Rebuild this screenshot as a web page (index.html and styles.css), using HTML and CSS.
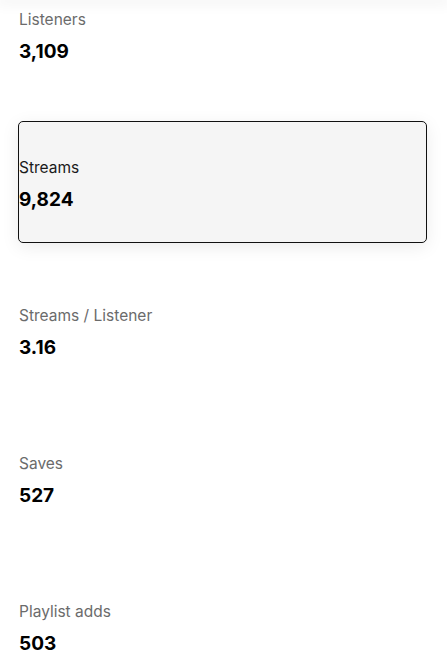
FILE: index.html
```html
<!DOCTYPE html>
<html>
<head>
    <link rel="stylesheet" href="styles.css">
</head>
<body>

<div class="top-shadow"></div>

<div class="stats">
    <div class="stat">
        <div class="stat-label">Listeners</div>
        <div class="stat-value">3,109</div>
    </div>
    <div class="stat selected">
        <div class="stat-label">Streams</div>
        <div class="stat-value">9,824</div>
    </div>
    <div class="stat">
        <div class="stat-label">Streams / Listener</div>
        <div class="stat-value">3.16</div>
    </div>
    <div class="stat">
        <div class="stat-label">Saves</div>
        <div class="stat-value">527</div>
    </div>
    <div class="stat">
        <div class="stat-label">Playlist adds</div>
        <div class="stat-value">503</div>
    </div>
</div>

</body>
</html>
```

FILE: styles.css
```css
body {
    font-family: Inter, "Noto Sans", sans-serif;
    margin: 0;
    padding: 0;
    background-color: #fff;
    overflow: hidden;
}
.top-shadow {
    height: 0;
    box-shadow: 0 0 14px 4px rgba(0, 0, 0, 0.06);
}
.stats {
    display: flex;
    flex-direction: column;
    gap: 26px;
    margin-top: -27px;
    padding: 0 20px 0 18px;
}
.stat {
    height: 122px;
    box-sizing: border-box;
    border: 1px solid transparent;
    border-radius: 5px;
    display: flex;
    flex-direction: column;
    justify-content: center;
    padding-top: 5px;
}
.stat.selected {
    border-color: #111;
    background-color: #f5f5f5;
    box-shadow: 0 4px 18px rgba(0, 0, 0, 0.08);
}
.stat-label {
    font-size: 15.5px;
    line-height: 20px;
    color: #6b6b6b;
    margin-bottom: 10px;
}
.stat.selected .stat-label {
    color: #1a1a1a;
}
.stat-value {
    font-size: 19px;
    line-height: 24px;
    font-weight: 700;
    color: #000;
}
```
